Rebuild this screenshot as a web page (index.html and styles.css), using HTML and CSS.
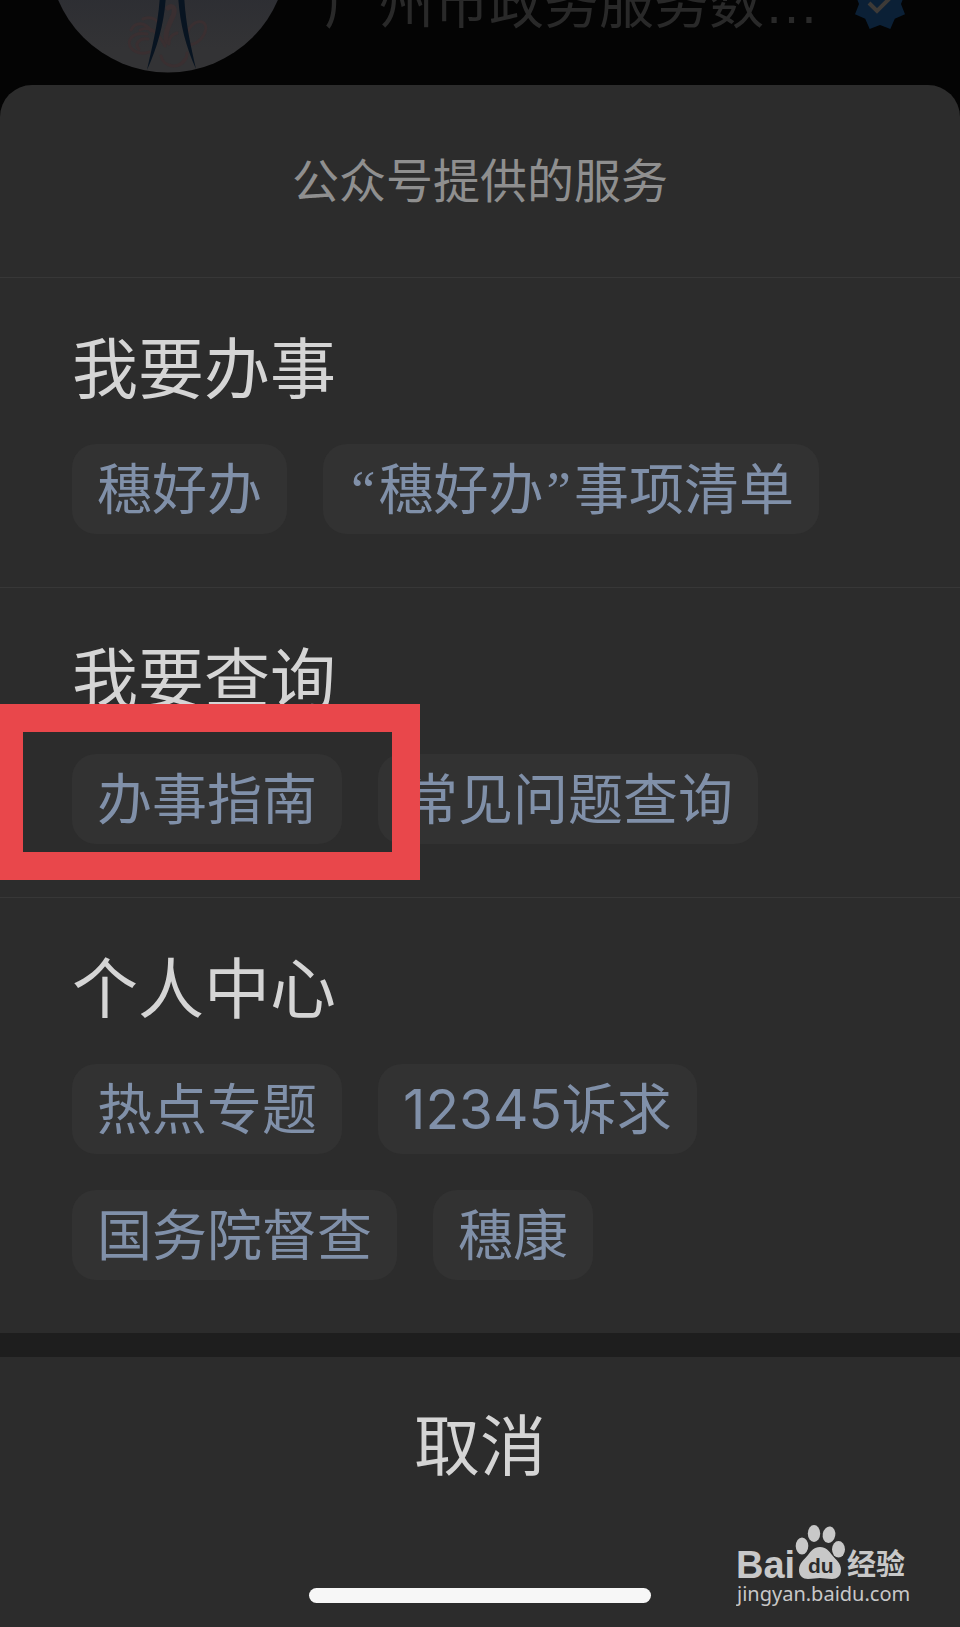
FILE: index.html
```html
<!DOCTYPE html>
<html lang="zh-CN">

<head>
  <meta charset="utf-8">
  <meta name="viewport" content="width=device-width, initial-scale=1">
  <title>公众号提供的服务</title>
  <link rel="icon" href="data:,">
  <link rel="stylesheet" href="styles.css">
</head>

<body>
  <header class="profile">
    <svg class="avatar" viewBox="0 0 240 240" aria-hidden="true">
      <defs>
        <linearGradient id="sky" x1="0" y1="0" x2="0" y2="1">
          <stop offset="0.68" stop-color="#2d2e33" />
          <stop offset="0.9" stop-color="#333335" />
        </linearGradient>
      </defs>
      <circle cx="120" cy="120" r="119.5" fill="url(#sky)" />
      <g fill="none" stroke="#3a2f31" stroke-width="3" stroke-linecap="round">
        <path d="M83 197c4-8 14-9 20 1M95 186c8-3 14 0 17 6M99 201c-15-3-22 8-15 15 5 5 13 5 17 3M100 206c-9-1-14 5-9 10M92 197c8-4 16 1 20 8" />
        <path stroke-width="5" d="M120 175c5-4 8 1 5 8-5 11-9 18-6 26" />
        <path d="M117 213c-3-8-8-10-8-13M121 211c0-7 4-10 8-11" />
        <path d="M140 205c-3-9 8-20 16-15 5 5-1 20-15 22M113 223c2 11 18 14 24 3M121 232c8 3 18-2 18-12" />
      </g>
      <path fill="#081421" d="M112 160h6c-1 27-8 53-19 77 5-23 12-49 13-77zM130 160h6c1 28 7 54 12 76-11-24-17-50-18-76z" />
    </svg>
    <span class="profile-name">广州市政务服务数<span class="dots">…</span></span>
    <svg class="verified" viewBox="-27 -27 54 54" aria-hidden="true">
      <path fill="#0b2036" d="M10.3 25 0 21-10.3 25-14.8 14.8-25 10.3-21 0-25-10.3-14.8-14.8-10.3-25 0-21 10.3-25 14.8-14.8 25-10.3 21 0 25 10.3 14.8 14.8z" />
      <path fill="none" stroke="#3d3a37" stroke-width="4" d="M-11-1-3 7 11-7" />
    </svg>
  </header>

  <main class="sheet">
    <h1 class="sheet-title">公众号提供的服务</h1>

    <section class="group">
      <h2>我要办事</h2>
      <div class="tags">
        <a class="tag" href="#">穗好办</a>
        <a class="tag" href="#"><span class="quote">“</span>穗好办<span class="quote">”</span>事项清单</a>
      </div>
    </section>

    <section class="group">
      <h2>我要查询</h2>
      <div class="tags">
        <a class="tag" href="#">办事指南</a>
        <a class="tag" href="#">常见问题查询</a>
      </div>
      <div class="highlight"></div>
    </section>

    <section class="group">
      <h2>个人中心</h2>
      <div class="tags">
        <a class="tag" href="#">热点专题</a>
        <a class="tag" href="#">12345诉求</a>
        <a class="tag" href="#">国务院督查</a>
        <a class="tag" href="#">穗康</a>
      </div>
    </section>

    <footer class="bottom">
      <button type="button" class="cancel">取消</button>
      <div class="home-bar"></div>

      <svg class="watermark" viewBox="0 0 176 88">
        <text class="wm-brand" x="0" y="58">Bai</text>
        <ellipse cx="66" cy="26" rx="6.3" ry="8.6" />
        <ellipse cx="78" cy="13.5" rx="6.2" ry="8.5" />
        <ellipse cx="93" cy="14.7" rx="6.3" ry="8.3" transform="rotate(10 93 14.7)" />
        <ellipse cx="102.5" cy="29.3" rx="6.5" ry="8.3" />
        <path d="M84 27c6 0 9 4 12 8 4 5 9 8 9 15 0 6-4 9-9 9-5 0-8-1-12-1s-7 1-12 1c-5 0-9-3-9-9 0-7 5-10 9-15 3-4 6-8 12-8z" />
        <text class="wm-du" x="72" y="53">du</text>
        <text class="wm-cn" x="111" y="55">经验</text>
        <text class="wm-url" x="1" y="81">jingyan.baidu.com</text>
      </svg>
    </footer>
  </main>
</body>

</html>
```
FILE: styles.css
```css
* {
  margin: 0;
  padding: 0;
  box-sizing: border-box;
}

body {
  font-family: Inter, 'Noto Sans CJK SC', sans-serif;
  font-size: 55px;
  color: #d5d5d5;
  background-color: #040404;
}

a {
  text-decoration: none;
}

/* dimmed page behind the sheet */
.profile {
  display: flex;
  align-items: flex-end;
  height: 85px;
  padding: 0 53px 0 48px;
  overflow: hidden;
}

.avatar {
  flex: none;
  width: 240px;
  height: 240px;
  margin-bottom: 12px;
}

.profile-name {
  flex: 1;
  margin: 0 0 52px 36px;
  line-height: 60px;
  color: #292929;
  white-space: nowrap;
}

.dots {
  font-family: 'Liberation Sans', sans-serif;
  line-height: 1;
}

.verified {
  flex: none;
  width: 54px;
  height: 54px;
  margin-bottom: 54px;
}

.sheet {
  background-color: #2c2c2c;
  border-radius: 32px 32px 0 0;
}

.sheet-title {
  padding: 60px 24px;
  font-size: 47px;
  font-weight: 400;
  line-height: 72px;
  text-align: center;
  color: #8f8f8f;
}

.group {
  position: relative;
  padding: 54px 72px 53px;
  border-top: 1px solid #373737;
}

.group h2 {
  margin-bottom: 38px;
  font-size: 66px;
  font-weight: 400;
  line-height: 74px;
}

.tags {
  display: flex;
  flex-wrap: wrap;
  gap: 36px;
}

.tag {
  padding: 0 25px;
  line-height: 90px;
  color: #8090a9;
  background-color: #323232;
  border-radius: 24px;
}

.quote {
  padding: 0 3px;
  font-family: 'Liberation Serif', serif;
  line-height: 1;
}

.highlight {
  position: absolute;
  top: 116px;
  left: 0;
  width: 420px;
  height: 176px;
  border: 28px solid #e9474b;
  border-left-width: 23px;
}

.bottom {
  position: relative;
  border-top: 24px solid #1e1e1e;
  padding-bottom: 24px;
}

.cancel {
  display: block;
  width: 100%;
  padding: 52px 0;
  font: inherit;
  font-size: 66px;
  line-height: 74px;
  color: inherit;
  background: none;
  border: 0;
}

.home-bar {
  width: 342px;
  height: 15px;
  margin: 53px auto 0;
  background-color: #f7f7f7;
  border-radius: 8px;
}

.watermark {
  position: absolute;
  right: 48px;
  bottom: 19px;
  width: 176px;
  height: 88px;
  fill: #c8c8c8;
}

.wm-brand {
  font: bold 38px 'Liberation Sans', sans-serif;
}

.wm-du {
  font: bold 21px 'Liberation Sans', sans-serif;
  fill: #2c2c2c;
}

.wm-cn {
  font: bold 29px 'Noto Sans CJK SC', sans-serif;
}

.wm-url {
  font: 20px 'Noto Sans', sans-serif;
}
```
